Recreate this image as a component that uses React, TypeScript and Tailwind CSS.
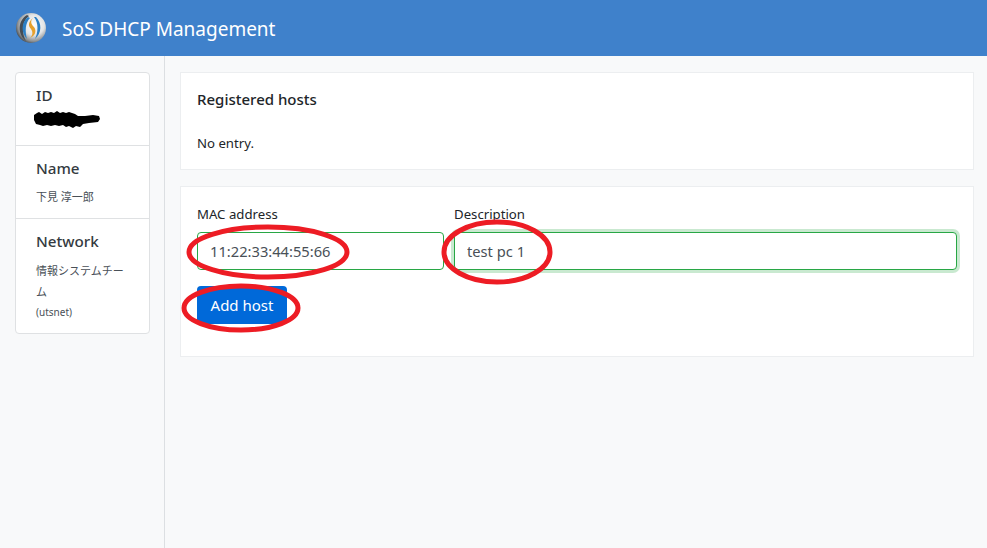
import React from 'react';

function Logo() {
    return (
        <svg width="32" height="32" viewBox="0 0 32 32" className="shrink-0">
            <defs>
                <radialGradient id="ball" cx="0.6" cy="0.4" r="0.68">
                    <stop offset="0" stopColor="#ffffff" />
                    <stop offset="0.5" stopColor="#e2e4e5" />
                    <stop offset="0.8" stopColor="#8b8f92" />
                    <stop offset="1" stopColor="#2f3336" />
                </radialGradient>
            </defs>
            <circle cx="16" cy="16" r="15" fill="url(#ball)" />
            <path d="M12 3 C3 8 2 22 11 29 C7 22 6 10 14 4 Z" fill="#454d55" />
            <path d="M13 5 C6 10 6 21 12 27 C10 20 10 11 15 6 Z" fill="#2c7fc4" />
            <path d="M21 5 C27 11 27 21 20 27 C23 21 24 11 19 5 Z" fill="#2c7fc4" />
            <path d="M18 6 C13 10 13 14 16 17 C18 20 18 23 15 26 C20 24 22 19 19 15 C16 12 15 9 18 6 Z" fill="#e6a02c" />
        </svg>
    );
}

function Redacted() {
    return (
        <svg width="68" height="18" viewBox="0 0 68 18" className="block">
            <path
                d="M1 4 L4 2 L6 1 L9 3 L12 1 L15 2 L18 1 L21 2 L24 0 L27 2 L30 1 L33 2 L36 1 L39 2 L42 3 L45 5 L48 5 L52 5 L60 4 L66 5 L67 8 L65 11 L56 12 L50 13 L47 16 L43 15 L40 17 L36 15 L33 16 L30 14 L26 15 L22 14 L18 15 L14 14 L10 15 L7 14 L3 13 L1 9 Z"
                fill="#000"
            />
        </svg>
    );
}

function SidebarSection({ title, children }: { title: string; children: React.ReactNode }) {
    return (
        <div className="border-b border-[#dfe1e3] px-[20px] pt-[10px] last:border-b-0">
            <h5 className="text-[15.2px] font-medium leading-[24px] text-[#343a40]">{title}</h5>
            {children}
        </div>
    );
}

export default function App() {
    return (
        <div
            className="relative flex h-screen flex-col overflow-hidden bg-[#f8f9fa] text-[#212529]"
            style={{ fontFamily: '"Noto Sans", "Noto Sans CJK JP", sans-serif' }}
        >
            <header className="flex h-14 shrink-0 items-center bg-[#3f81cb] pl-[15px] text-white">
                <Logo />
                <span className="ml-[15px] mt-[2px] text-[19px] font-normal">SoS DHCP Management</span>
            </header>

            <div className="flex flex-1">
                <aside className="w-[165px] shrink-0 border-r border-[#dcdfe2] pl-[15px] pr-[14px] pt-4">
                    <div className="rounded border border-[#dfe1e3] bg-white">
                        <SidebarSection title="ID">
                            <div className="h-[38px] -ml-[3px] pt-[4px]">
                                <Redacted />
                            </div>
                        </SidebarSection>
                        <SidebarSection title="Name">
                            <p className="h-[38px] pt-[7px] text-[11px] leading-[20px] text-[#495057]">下見 淳一郎</p>
                        </SidebarSection>
                        <SidebarSection title="Network">
                            <p className="w-[94px] pt-[7px] text-[11px] leading-[21px] text-[#495057]">情報システムチーム</p>
                            <p className="pb-[12px] pt-[1px] text-[10px] leading-[18px] text-[#495057]">(utsnet)</p>
                        </SidebarSection>
                    </div>
                </aside>

                <main className="flex-1 pl-[15px] pr-[13px] pt-4">
                    <section className="h-[98px] border border-[#eceef0] bg-white px-4 pt-[14px]">
                        <h6 className="text-[15px] font-medium leading-[24px] text-[#212529]">Registered hosts</h6>
                        <p className="mt-[22px] text-[13.2px] leading-[20px]">No entry.</p>
                    </section>

                    <section className="mt-4 h-[171px] border border-[#eceef0] bg-white px-4 pt-[17px]">
                        <div className="flex">
                            <div className="w-[247px] shrink-0">
                                <label className="block text-[13.2px] leading-[20px] text-[#212529]">MAC address</label>
                                <input
                                    readOnly
                                    value="11:22:33:44:55:66"
                                    className="mt-[8px] h-[38px] w-full rounded border border-[#28a745] bg-white px-3 text-[14.7px] text-[#495057] outline-none"
                                />
                            </div>
                            <div className="ml-[10px] flex-1">
                                <label className="block text-[13.2px] leading-[20px] text-[#212529]">Description</label>
                                <input
                                    readOnly
                                    value="test pc 1"
                                    className="mt-[8px] h-[38px] w-full rounded border border-[#28a745] bg-white px-3 text-[14.7px] text-[#495057] shadow-[0_0_0_3px_rgba(40,167,69,0.25)] outline-none"
                                />
                            </div>
                        </div>
                        <button className="mt-4 h-[38px] w-[90px] rounded bg-[#0069d9] text-[15px] text-white">Add host</button>
                    </section>
                </main>
            </div>

            {/* hand-drawn red circles on top of the screenshot */}
            <svg className="pointer-events-none absolute left-0 top-0" width="987" height="548" fill="none" stroke="#ed1c24" strokeWidth="5">
                <ellipse cx="268" cy="252" rx="79" ry="25" />
                <ellipse cx="497" cy="252" rx="53" ry="30" />
                <ellipse cx="241" cy="308" rx="57" ry="22" />
            </svg>
        </div>
    );
}
